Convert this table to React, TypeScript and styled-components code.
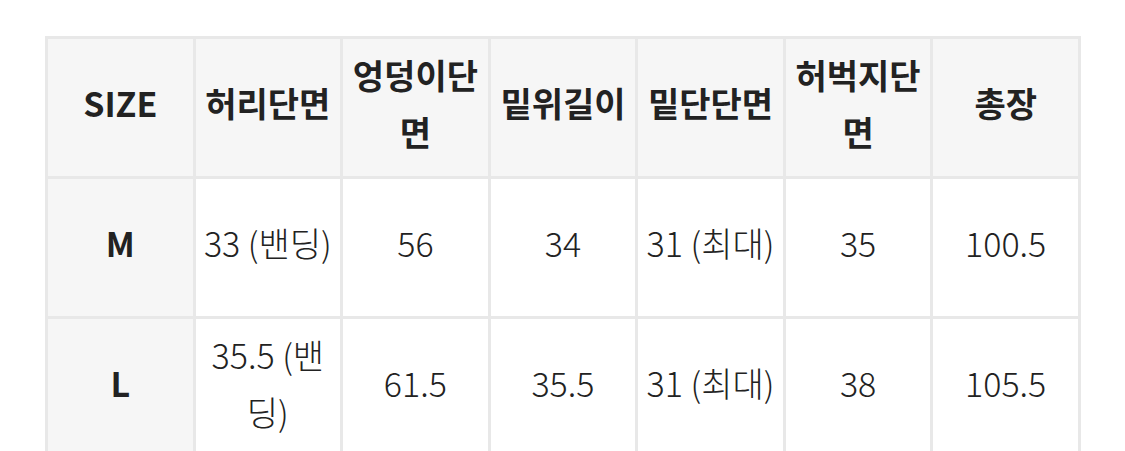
import React from "react";
import styled, { createGlobalStyle } from "styled-components";

const Global = createGlobalStyle`
  html, body { margin: 0; padding: 0; background: #fff; }
  body { font-family: "Noto Sans CJK KR", "Noto Sans", sans-serif; color: #222; }
`;

const Page = styled.div`
  padding: 36px 0 0 45px;
`;

const Table = styled.table`
  border-collapse: collapse;
  table-layout: fixed;
  width: 1036px;
`;

const Cell = styled.td<{ $head?: boolean; $gray?: boolean }>`
  border: 3px solid #e8e8e8;
  height: 140px;
  padding: 0 2px 10px;
  box-sizing: border-box;
  text-align: center;
  vertical-align: middle;
  font-size: 34px;
  line-height: 57px;
  font-weight: ${(p) => (p.$head ? 700 : 300)};
  background: ${(p) => (p.$gray ? "#f6f6f6" : "#fff")};
  color: #222;
  word-break: break-all;
`;

const headers = ["SIZE", "허리단면", "엉덩이단면", "밑위길이", "밑단단면", "허벅지단면", "총장"];
const rows = [
  ["M", "33 (밴딩)", "56", "34", "31 (최대)", "35", "100.5"],
  ["L", "35.5 (밴딩)", "61.5", "35.5", "31 (최대)", "38", "105.5"],
];

export default function App() {
  return (
    <>
      <Global />
      <Page>
        <Table>
          <tbody>
            <tr>
              {headers.map((h) => (
                <Cell key={h} $head $gray as="th">
                  {h}
                </Cell>
              ))}
            </tr>
            {rows.map((r) => (
              <tr key={r[0]}>
                {r.map((c, i) => (
                  <Cell key={i} $head={i === 0} $gray={i === 0}>
                    {c}
                  </Cell>
                ))}
              </tr>
            ))}
          </tbody>
        </Table>
      </Page>
    </>
  );
}
